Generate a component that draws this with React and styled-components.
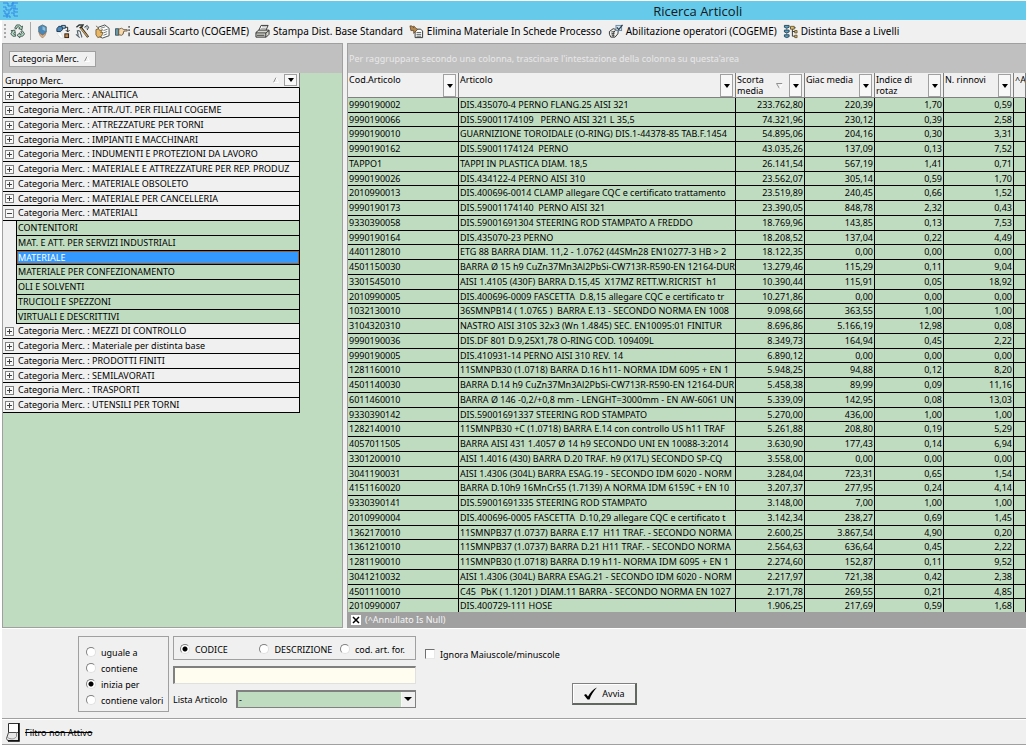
import React from 'react';
import styled, { createGlobalStyle, css } from 'styled-components';

const GREEN = '#c0dcc0';
const FACE = '#f0f0f0';

const Global = createGlobalStyle`
  *, *::before, *::after { box-sizing: border-box; }
  body { margin: 0; background: #fff; }
  body, button, input, select { font-family: "Noto Sans", "DejaVu Sans", sans-serif; font-size: 9px; color: #000; }
  button { padding: 0; cursor: default; }
`;

const Window = styled.div`
  display: flex;
  flex-direction: column;
  height: 100vh;
  padding: 1px 3px 0 0;
`;

const TitleBar = styled.header`
  height: 19px;
  padding-left: 36%;
  background: #66caeb;
  display: flex;
  align-items: center;
  justify-content: center;
  position: relative;
`;

const AppIcon = styled.svg`
  position: absolute;
  left: 3px;
  top: 1px;
  width: 15px;
  height: 16px;
`;

const Title = styled.h1`
  margin: 0;
  font: 400 13px/18px "Open Sans", "Noto Sans", sans-serif;
  color: #101820;
`;

const Frame = styled.div`
  flex: 1;
  min-height: 0;
  margin-left: 2px;
  display: flex;
  flex-direction: column;
  background: ${FACE};
`;

const ToolBar = styled.nav`
  height: 23px;
  display: flex;
  align-items: center;
  gap: 4px;
  padding: 0 0 1px 2px;
`;

const Grip = styled.span`
  width: 2px;
  height: 14px;
  background: repeating-linear-gradient(#a8a8a8 0 2px, ${FACE} 2px 4px);
`;

const Divider = styled.span`
  width: 1px;
  height: 18px;
  background: #a8a8a8;
`;

const ToolButton = styled.button`
  border: 0;
  background: none;
  display: flex;
  align-items: center;
  gap: 3px;
  height: 18px;
  padding-right: ${(p) => (p.$labelled ? 2 : 0)}px;
  font-size: 10px;
  white-space: nowrap;
  min-width: 16px;
  svg { width: 15px; height: 15px; flex: none; }
`;

const Panes = styled.main`
  flex: 1;
  min-height: 0;
  display: flex;
  gap: 4px;
`;

const TreePane = styled.section`
  width: 341px;
  flex: none;
  border: 1px solid #a0a0a0;
  background: ${GREEN};
`;

const GridPane = styled.section`
  flex: 1;
  min-width: 0;
  border: 1px solid #a0a0a0;
  border-width: 1px 0 0 1px;
  background: ${GREEN};
  display: flex;
  flex-direction: column;
`;

const GroupBar = styled.div`
  height: 29px;
  flex: none;
  background: #c0c0c0;
  color: #e8e8e8;
  display: flex;
  align-items: center;
  padding-left: ${(p) => (p.$chip ? 6 : 1)}px;
`;

const Chip = styled.button`
  width: 87px;
  height: 16px;
  padding-left: 2px;
  border: 1px solid #a0a0a0;
  background: ${FACE};
  display: flex;
  align-items: center;
  gap: 5px;
`;

const FilterButton = styled.button`
  width: 13px;
  height: ${(p) => (p.$short ? 12 : 23)}px;
  flex: none;
  border: 1px solid #a0a0a0;
  background: #f8f8f8;
  display: flex;
  align-items: center;
  justify-content: center;
  &::after {
    content: "";
    border: 3px solid transparent;
    border-top: 4px solid #000;
    border-bottom: 0;
  }
`;

const TreeHead = styled.div`
  width: 297px;
  height: 15px;
  padding: 0 2px;
  background: ${FACE};
  border-right: 1px solid #808080;
  border-bottom: 1px solid #000;
  display: flex;
  align-items: center;
  gap: 5px;
  span { flex: 1; }
`;

const TreeList = styled.ul`
  width: 297px;
  margin: 0;
  padding: 0;
  list-style: none;
  background: ${FACE};
`;

const TreeRow = styled.li`
  height: 15px;
  line-height: 12px;
  display: flex;
  align-items: center;
  gap: 4px;
  white-space: nowrap;
  overflow: hidden;
  border-right: 1px solid #000;
  border-bottom: 1px solid #000;
  padding-left: 2px;
  &:nth-child(4n) { height: 14px; }
  ${(p) => p.$child && css`
    margin-left: 13px;
    padding-left: 1px;
    border-left: 1px solid #000;
    background: ${GREEN};
  `}
  ${(p) => p.$selected && css`
    background: #3399ff;
    color: #fff;
    box-shadow: inset 0 0 0 1px #9a6030;
  `}
`;

const Expander = styled.button`
  width: 9px;
  height: 9px;
  flex: none;
  border: 1px solid #808080;
  background: #f8f8f8;
  svg { display: block; width: 7px; height: 7px; }
`;

const TableArea = styled.div`
  flex: 1;
  min-height: 0;
  overflow: hidden;
`;

const Table = styled.table`
  width: 100%;
  table-layout: fixed;
  border-collapse: separate;
  border-spacing: 0;
`;

const HeadCell = styled.th`
  height: 25px;
  padding: 0;
  background: ${FACE};
  border-right: 1px solid #808080;
  border-bottom: 1px solid #808080;
  font-weight: 400;
  text-align: left;
  vertical-align: top;
`;

const HeadInner = styled.div`
  display: flex;
  height: 24px;
  padding: 1px 2px 0 1px;
  line-height: 11px;
  overflow: hidden;
  white-space: nowrap;
  span { flex: 1; white-space: pre-line; }
  > svg { align-self: center; margin-right: 6px; }
`;

const Row = styled.tr`
  td { height: 15px; line-height: 14px; }
  &:nth-child(4n + 2) td { height: 14px; line-height: 13px; }
`;

const Cell = styled.td`
  padding: 0 1px;
  border-right: 1px solid #000;
  border-bottom: 1px solid #000;
  white-space: pre;
  overflow: hidden;
  text-align: ${(p) => (p.$num ? 'right' : 'left')};
`;

const FilterBar = styled.div`
  height: 16px;
  flex: none;
  background: #a0a0a0;
  color: #f4f4f4;
  display: flex;
  align-items: center;
  gap: 4px;
  padding: 0 0 1px 3px;
`;

const ClearButton = styled.button`
  width: 10px;
  height: 10px;
  border: 0;
  background: #fff;
  svg { display: block; }
`;

const SearchPanel = styled.form`
  flex: none;
  display: flex;
  align-items: flex-start;
  gap: 4px;
  padding: 7px 0 6px 76px;
  border-top: 1px solid #fff;
  border-bottom: 1px solid #a0a0a0;
`;

const ModeBox = styled.fieldset`
  margin: 0;
  width: 91px;
  height: 76px;
  padding: 7px 0 0 7px;
  border: 1px solid #a0a0a0;
  display: flex;
  flex-direction: column;
`;

const FieldBox = styled.fieldset`
  margin: 0;
  height: 24px;
  padding: 4px 10px 0 6px;
  border: 1px solid #a0a0a0;
  display: flex;
  justify-content: space-between;
`;

const Choice = styled.label`
  display: flex;
  align-items: center;
  gap: 5px;
  height: 16px;
  white-space: nowrap;
  margin-right: ${(p) => p.$after || 0}px;
`;

const Radio = styled.input.attrs({ type: 'radio' })`
  appearance: none;
  margin: 0;
  width: 10px;
  height: 10px;
  flex: none;
  border-radius: 50%;
  border: 1px solid #808080;
  border-right-color: #e0e0e0;
  border-bottom-color: #e0e0e0;
  background: #fff;
  &:checked { background: radial-gradient(circle, #000 2px, #fff 3px); }
`;

const Check = styled.input.attrs({ type: 'checkbox' })`
  appearance: none;
  margin: 0;
  width: 10px;
  height: 10px;
  border: 1px solid #707070;
  border-right-color: #e8e8e8;
  border-bottom-color: #e8e8e8;
  background: #fff;
`;

const Fields = styled.div`
  width: 243px;
  display: flex;
  flex-direction: column;
`;

const CodeInput = styled.input`
  height: 18px;
  margin: 6px 0;
  width: 100%;
  border: 1px solid #e0e0e0;
  border-top: 2px solid #808080;
  border-left: 2px solid #808080;
  background: #fffcf0;
`;

const ListField = styled.div`
  display: flex;
  align-items: center;
  justify-content: space-between;
  position: relative;
  &::after {
    content: "";
    position: absolute;
    right: 4px;
    top: 7px;
    border: 4px solid transparent;
    border-top: 4px solid #000;
    border-bottom: 0;
    pointer-events: none;
  }
`;

const Select = styled.select`
  appearance: none;
  width: 180px;
  height: 18px;
  padding: 0 0 0 1px;
  border: 1px solid #808080;
  border-top: 2px solid #808080;
  border-left: 2px solid #808080;
  border-radius: 0;
  background: linear-gradient(90deg, ${GREEN} calc(100% - 14px), #fff calc(100% - 14px), ${FACE} calc(100% - 13px));
`;

const Actions = styled.div`
  padding: 10px 0 0 5px;
  display: flex;
  flex-direction: column;
  gap: 21px;
`;

const RunButton = styled.button`
  width: 65px;
  height: 22px;
  margin-left: 147px;
  border: 1px solid #808080;
  border-right: 2px solid #606860;
  border-bottom: 2px solid #606860;
  background: ${FACE};
  box-shadow: inset 1px 1px 0 #fff;
  display: flex;
  align-items: center;
  justify-content: center;
  gap: 4px;
`;

const StatusBar = styled.footer`
  height: 26px;
  flex: none;
  border-top: 1px solid #fff;
  border-bottom: 1px solid #a0a0a0;
  display: flex;
  align-items: center;
  gap: 5px;
  padding-left: 4px;
`;

const SortUp = () => (
  <svg width="6" height="6" viewBox="0 0 6 6"><path d="M0.5 5.5L3 .5" stroke="#909090" fill="none" /><path d="M3 .5L5.5 5.5H.5" stroke="#fff" fill="none" /></svg>
);
const SortDown = () => (
  <svg width="7" height="6" viewBox="0 0 7 6"><path d="M6.500 .5H.5L3.500 5.500" stroke="#909090" fill="none" /><path d="M3.500 5.500L6.500 .5" stroke="#fff" fill="none" /></svg>
);

const icons = {
  recycle: (
    <g fill="#b8dcc8" stroke="#304840" strokeWidth=".9">
      <path d="M5 4.500L7 1h3.500l1.500 2 1.300-.8-.5 3.800-3.500-1 1.200-.8L9 3H8L6.500 5.500z" />
      <path d="M13 7l2.500 3.500L13.500 13H10.500v1.800L7.500 12l3-2.500V11h1.500l.8-1-1.300-2z" />
      <path d="M6 13H3L.8 10.500 2.500 8 1 7.200 5 6.500l.8 3.500-1.300-.8-.7 1.300.7.8H6z" />
    </g>
  ),
  hex: (
    <g>
      <path d="M8 1l4 2v5.500L8 12 4 8.500V3z" fill="#4888b8" stroke="#587888" />
      <path d="M8 2.500l3 1.500v3.500L8 6z" fill="#90c0d8" />
      <path d="M4 9l4 3 4-3-1.500 3.500L8 15l-2.500-2.500z" fill="#e0b080" stroke="#806850" strokeWidth=".6" />
    </g>
  ),
  flow: (
    <g>
      <path d="M2 5l2-2.500h4v3.500l-2 2H2z" fill="#4a88b8" stroke="#203850" />
      <path d="M7 1.500h4v3H8z" fill="#a0d0e8" stroke="#203850" />
      <path d="M11 3.500h2.500V8M11.500 6.500l2 2 2-2" fill="none" stroke="#202020" />
      <rect x="10.500" y="10.500" width="4" height="4" fill="#c08850" stroke="#302010" />
      <path d="M2 10l4 5h3l-3-6z" fill="#fff" stroke="#d0d8d8" strokeWidth=".6" />
    </g>
  ),
  tools: (
    <g fill="none">
      <path d="M1.500 3.500L4.500 1h4L7 3.500" stroke="#303838" strokeWidth="1.600" />
      <path d="M5.500 3l8.500 11" stroke="#302818" strokeWidth="2.600" />
      <path d="M6 4.500l7.500 9" stroke="#d0a868" strokeWidth="1.200" />
      <path d="M2 7.500c2-1 4 0 4 2s2 3 1 5M1 11l4 3.500M2.500 7.500l1 5" stroke="#506068" strokeWidth="1.200" />
      <path d="M10 3.500l3-2 1.500 2-1.500 3" fill="#b8c4c8" stroke="#303838" strokeWidth=".9" />
    </g>
  ),
  note: (
    <g>
      <path d="M3.500 3.500l7-2.500 4.500 3.500v8l-7 2.500-4.500-2z" fill="#fff" stroke="#404848" />
      <path d="M6 4.500l5-1.500M9 7l4.500-1.500M9 9.500l4-1.500M9 12l4-1.500" stroke="#707878" />
      <path d="M1 2l2.500 2M1 6l3-1 1 2 3-1-2 3h2.500l-1.500 4-4 1.500-2-3z" fill="#e8b868" stroke="#604820" strokeWidth=".8" />
    </g>
  ),
  hand: (
    <g>
      <path d="M.5 5h3.500v7H.5z" fill="#6898a8" stroke="#284048" strokeWidth=".8" />
      <path d="M4 5.500l3-1 2.500 1.500H13v1.500H9.500v1H9v1.500h-.5v1L7 12 4 11.500z" fill="#f8d8a8" stroke="#504030" strokeWidth=".8" />
      <path d="M15 2v2M15 5.500v2M15 9v4" stroke="#202020" strokeWidth="1.200" />
    </g>
  ),
  printer: (
    <g stroke="#303030">
      <path d="M4 7l2.500-5.500H14L11.500 7z" fill="#fff" />
      <path d="M6.500 5h5M7.500 3h5" stroke="#a0a0a0" />
      <path d="M1 9l3-2.500h11V11l-3 3H1z" fill="#d8d8d0" />
      <path d="M1 9.500h10.500L15 7M11.500 9.500V14M2 12h8" fill="none" />
    </g>
  ),
  doc: (
    <g>
      <path d="M6.500 5.500h6l2 2v7h-8z" fill="#fff" stroke="#303030" />
      <path d="M8 9h5M8 11h5M8 13h5" stroke="#505858" />
      <path d="M1 2h2l2 2V2l4 4-4 4V7H2z" fill="#b08850" stroke="#604020" strokeWidth=".8" />
    </g>
  ),
  fist: (
    <g>
      <path d="M1.500 8l4-3 5.500 1.500-.5 4-3 3.500H3L1.500 11z" fill="#f0f0ec" stroke="#303030" />
      <path d="M3.500 8.500l4-.5M3.500 10.500l3.500-.5M8 6.500L5.500 10v4M4 12h3" stroke="#404040" fill="none" />
      <rect x="8.500" y="1.500" width="6" height="5.500" fill="#d0e4f0" stroke="#6888a0" />
      <path d="M9.500 3.500l2 2.500 4-5" fill="none" stroke="#283848" strokeWidth="1.300" />
    </g>
  ),
  tree: (
    <g>
      <path d="M1.500 1.500h5v2l-2.500 1-2.500-1zM1.500 6.500h5v2l-2.500 1-2.500-1zM1.500 11.500h5v2l-2.500 1-2.500-1z" fill="#58a0c8" stroke="#284858" />
      <path d="M4 5v1M4 10v1M7.500 4h6M10 4v9h3M10 8h3" stroke="#303030" fill="none" />
      <path d="M8 2.500h4v3H8zM12.500 7h2.500v2.500h-2.500zM12.500 12h2.500v2.500h-2.500z" fill="#e0c068" stroke="#504020" strokeWidth=".8" />
    </g>
  ),
};

const Icon = ({ name }) => <svg viewBox="0 0 16 16" aria-hidden="true">{icons[name]}</svg>;

const tools = [
  ['hex', '', 'Articolo'], ['flow', '', 'Flusso'], ['tools', '', 'Strumenti'], ['note', '', 'Note'],
  ['hand', 'Causali Scarto (COGEME)'],
  ['printer', 'Stampa Dist. Base Standard'],
  ['doc', 'Elimina Materiale In Schede Processo'],
  ['fist', 'Abilitazione operatori (COGEME)'],
  ['tree', 'Distinta Base a Livelli'],
];

const groups = [
  ['ANALITICA'], ['ATTR./UT. PER FILIALI COGEME'], ['ATTREZZATURE PER TORNI'], ['IMPIANTI E MACCHINARI'],
  ['INDUMENTI E PROTEZIONI DA LAVORO'], ['MATERIALE E ATTREZZATURE PER REP. PRODUZ'],
  ['MATERIALE OBSOLETO'], ['MATERIALE PER CANCELLERIA'],
  ['MATERIALI', ['CONTENITORI', 'MAT. E ATT. PER SERVIZI INDUSTRIALI', 'MATERIALE', 'MATERIALE PER CONFEZIONAMENTO', 'OLI E SOLVENTI', 'TRUCIOLI E SPEZZONI', 'VIRTUALI E DESCRITTIVI']],
  ['MEZZI DI CONTROLLO'], ['Materiale per distinta base'], ['PRODOTTI FINITI'], ['SEMILAVORATI'], ['TRASPORTI'], ['UTENSILI PER TORNI'],
];

const articles = `9990190002|DIS.435070-4 PERNO FLANG.25 AISI 321|233.762,80|220,39|1,70|0,59
9990190066|DIS.59001174109   PERNO AISI 321 L 35,5|74.321,96|230,12|0,39|2,58
9990190010|GUARNIZIONE TOROIDALE (O-RING) DIS.1-44378-85 TAB.F.1454|54.895,06|204,16|0,30|3,31
9990190162|DIS.59001174124  PERNO|43.035,26|137,09|0,13|7,52
TAPPO1|TAPPI IN PLASTICA DIAM. 18,5|26.141,54|567,19|1,41|0,71
9990190026|DIS.434122-4 PERNO AISI 310|23.562,07|305,14|0,59|1,70
2010990013|DIS.400696-0014 CLAMP allegare CQC e certificato trattamento|23.519,89|240,45|0,66|1,52
9990190173|DIS.59001174140  PERNO AISI 321|23.390,05|848,78|2,32|0,43
9330390058|DIS.59001691304 STEERING ROD STAMPATO A FREDDO|18.769,96|143,85|0,13|7,53
9990190164|DIS.435070-23 PERNO|18.208,52|137,04|0,22|4,49
4401128010|ETG 88 BARRA DIAM. 11,2 - 1.0762 (44SMn28 EN10277-3 HB > 2|18.122,35|0,00|0,00|0,00
4501150030|BARRA Ø 15 h9 CuZn37Mn3Al2PbSi-CW713R-R590-EN 12164-DUR|13.279,46|115,29|0,11|9,04
3301545010|AISI 1.4105 (430F) BARRA D.15,45  X17MZ RETT.W.RICRIST  h1|10.390,44|115,91|0,05|18,92
2010990005|DIS.400696-0009 FASCETTA  D.8,15 allegare CQC e certificato tr|10.271,86|0,00|0,00|0,00
1032130010|36SMNPB14 ( 1.0765 )  BARRA E.13 - SECONDO NORMA EN 1008|9.098,66|363,55|1,00|1,00
3104320310|NASTRO AISI 310S 32x3 (Wn 1.4845) SEC. EN10095:01 FINITUR|8.696,86|5.166,19|12,98|0,08
9990190036|DIS.DF 801 D.9,25X1,78 O-RING COD. 109409L|8.349,73|164,94|0,45|2,22
9990190005|DIS.410931-14 PERNO AISI 310 REV. 14|6.890,12|0,00|0,00|0,00
1281160010|11SMNPB30 (1.0718) BARRA D.16 h11- NORMA IDM 6095 + EN 1|5.948,25|94,88|0,12|8,20
4501140030|BARRA D.14 h9 CuZn37Mn3Al2PbSi-CW713R-R590-EN 12164-DUR|5.458,38|89,99|0,09|11,16
6011460010|BARRA Ø 146 -0,2/+0,8 mm - LENGHT=3000mm - EN AW-6061 UN|5.339,09|142,95|0,08|13,03
9330390142|DIS.59001691337 STEERING ROD STAMPATO|5.270,00|436,00|1,00|1,00
1282140010|11SMNPB30 +C (1.0718) BARRA E.14 con controllo US h11 TRAF|5.261,88|208,80|0,19|5,29
4057011505|BARRA AISI 431 1.4057 Ø 14 h9 SECONDO UNI EN 10088-3:2014|3.630,90|177,43|0,14|6,94
3301200010|AISI 1.4016 (430) BARRA D.20 TRAF. h9 (X17L) SECONDO SP-CQ|3.558,00|0,00|0,00|0,00
3041190031|AISI 1.4306 (304L) BARRA ESAG.19 - SECONDO IDM 6020 - NORM|3.284,04|723,31|0,65|1,54
4151160020|BARRA D.10h9 16MnCrS5 (1.7139) A NORMA IDM 6159C + EN 10|3.207,37|277,95|0,24|4,14
9330390141|DIS.59001691335 STEERING ROD STAMPATO|3.148,00|7,00|1,00|1,00
2010990004|DIS.400696-0005 FASCETTA  D.10,29 allegare CQC e certificato t|3.142,34|238,27|0,69|1,45
1362170010|11SMNPB37 (1.0737) BARRA E.17  H11 TRAF. - SECONDO NORMA|2.600,25|3.867,54|4,90|0,20
1361210010|11SMNPB37 (1.0737) BARRA D.21 H11 TRAF. - SECONDO NORMA|2.564,63|636,64|0,45|2,22
1281190010|11SMNPB30 (1.0718) BARRA D.19 h11- NORMA IDM 6095 + EN 1|2.274,60|152,87|0,11|9,52
3041210032|AISI 1.4306 (304L) BARRA ESAG.21 - SECONDO IDM 6020 - NORM|2.217,97|721,38|0,42|2,38
4501110010|C45  PbK ( 1.1201 ) DIAM.11 BARRA - SECONDO NORMA EN 1027|2.171,78|269,55|0,21|4,85
2010990007|DIS.400729-111 HOSE|1.906,25|217,69|0,59|1,68`.split('\n').map((line) => line.split('|'));

const columns = [
  ['Cod.Articolo', 111], ['Articolo', null], ['Scorta\nmedia', 69, true], ['Giac media', 70],
  ['Indice di\nrotaz', 69], ['N. rinnovi', 70], ['^Annullato', 12],
];

function Tree() {
  return (
    <TreePane>
      <GroupBar $chip><Chip type="button">Categoria Merc. <SortUp /></Chip></GroupBar>
      <TreeHead><span>Gruppo Merc.</span><SortUp /><FilterButton $short type="button" aria-label="Filtra Gruppo Merc." /></TreeHead>
      <TreeList>
        {groups.flatMap(([name, children]) => [
          <TreeRow key={name}>
            <Expander type="button" aria-label={`Espandi ${name}`}>
              <svg viewBox="0 0 7 7"><path d={children ? 'M1 3.500H6' : 'M1 3.500H6M3.500 1V6'} stroke="#404040" /></svg>
            </Expander>
            Categoria Merc. : {name}
          </TreeRow>,
          ...(children || []).map((child) => (
            <TreeRow key={`c-${child}`} $child $selected={child === 'MATERIALE'}>{child}</TreeRow>
          )),
        ])}
      </TreeList>
    </TreePane>
  );
}

function Articles() {
  return (
    <GridPane>
      <GroupBar>Per raggruppare secondo una colonna, trascinare l'intestazione della colonna su questa'area</GroupBar>
      <TableArea>
        <Table>
          <colgroup>{columns.map(([name, width]) => <col key={name} width={width || undefined} />)}</colgroup>
          <thead>
            <tr>
              {columns.map(([name, width, sorted]) => (
                <HeadCell key={name} scope="col">
                  <HeadInner>
                    <span>{name}</span>
                    {sorted && <SortDown />}
                    {width !== 12 && <FilterButton type="button" aria-label={`Filtra ${name}`} />}
                  </HeadInner>
                </HeadCell>
              ))}
            </tr>
          </thead>
          <tbody>
            {articles.map((cells) => (
              <Row key={cells[0]}>
                {cells.map((value, i) => <Cell key={i} $num={i > 1}>{value}</Cell>)}
                <Cell />
              </Row>
            ))}
          </tbody>
        </Table>
      </TableArea>
      <FilterBar>
        <ClearButton type="button" aria-label="Rimuovi filtro">
          <svg width="10" height="10" viewBox="0 0 10 10"><path d="M2 2l6 6M8 2l-6 6" stroke="#000" strokeWidth="1.500" /></svg>
        </ClearButton>
        (^Annullato Is Null)
      </FilterBar>
    </GridPane>
  );
}

export default function App() {
  return (
    <Window>
      <Global />
      <TitleBar>
        <AppIcon viewBox="0 0 15 16">
          <path d="M0 1h5v3h4V1h6M0 5h3v3h5V6h3v4h4M0 9h2v3h4V9M8 11h3v3h4M0 14h7v2M12 3v4h3M4 12v4M10 0v5" fill="none" stroke="#2c88e8" strokeWidth="1" />
        </AppIcon>
        <Title>Ricerca Articoli</Title>
      </TitleBar>
      <Frame>
        <ToolBar>
          <Grip />
          <ToolButton type="button" aria-label="Aggiorna"><Icon name="recycle" /></ToolButton>
          <Divider />
          {tools.map(([icon, text, label]) => (
            <ToolButton key={icon} type="button" $labelled={!!text} aria-label={label}><Icon name={icon} />{text}</ToolButton>
          ))}
        </ToolBar>
        <Panes>
          <Tree />
          <Articles />
        </Panes>
        <SearchPanel onSubmit={(e) => e.preventDefault()}>
          <ModeBox>
            {['uguale a', 'contiene', 'inizia per', 'contiene valori'].map((mode) => (
              <Choice key={mode}><Radio name="mode" defaultChecked={mode === 'inizia per'} />{mode}</Choice>
            ))}
          </ModeBox>
          <Fields>
            <FieldBox>
              <Choice $after={24}><Radio name="field" defaultChecked />CODICE</Choice>
              <Choice><Radio name="field" />DESCRIZIONE</Choice>
              <Choice><Radio name="field" />cod. art. for.</Choice>
            </FieldBox>
            <CodeInput aria-label="Testo da cercare" />
            <ListField>
              <label htmlFor="lista">Lista Articolo</label>
              <Select id="lista"><option>-</option></Select>
            </ListField>
          </Fields>
          <Actions>
            <Choice><Check />Ignora Maiuscole/minuscole</Choice>
            <RunButton type="submit">
              <svg width="15" height="13" viewBox="0 0 15 13"><path d="M1 8l2-1 2 2.500C7 6 10 2 14 .5 10.500 4 8 8 6.500 12.500H4.500z" fill="#000" /></svg>
              Avvia
            </RunButton>
          </Actions>
        </SearchPanel>
        <StatusBar>
          <svg width="14" height="20" viewBox="0 0 14 20">
            <path d="M2.500 1.500h10v10h-10z" fill="#fff" stroke="#303030" />
            <path d="M2.500 10.500h10v8h-11l-1-2z" fill="#e8e8e8" stroke="#505050" />
            <path d="M1.500 15.500c3 2 7 2 9-1v-4" fill="none" stroke="#909090" />
            <path d="M13 1v18H2" fill="none" stroke="#000" strokeWidth="1.500" />
          </svg>
          <s>Filtro non Attivo</s>
        </StatusBar>
      </Frame>
    </Window>
  );
}
